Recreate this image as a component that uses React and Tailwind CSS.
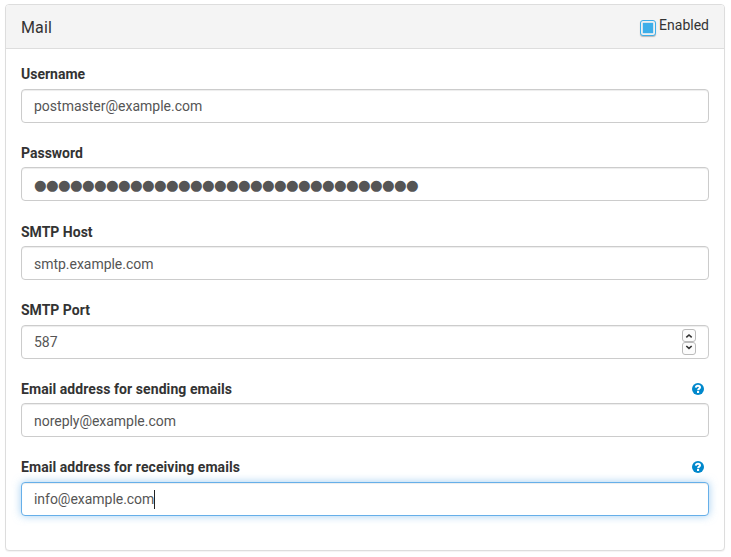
function Help() {
  return (
    <svg className="mr-[5px] h-3 w-3" viewBox="0 0 12 12" aria-label="Help">
      <circle cx="6" cy="6" r="6" fill="#0088cc" />
      <path d="M3.8 4.6C4 3.2 4.9 2.8 6 2.8C7.3 2.8 8 3.5 8 4.4C8 5.6 6.1 5.6 6.1 7.2" fill="none" stroke="#fff" strokeWidth="2" />
      <rect x="5" y="8" width="2.1" height="2" fill="#fff" />
    </svg>
  );
}

function Stepper() {
  return (
    <div className="flex w-3.5 flex-col">
      <button className="flex h-[13px] items-center justify-center rounded-[3px] border border-[#bbb] bg-[#fcfcfc]">
        <svg className="h-1.5 w-2" viewBox="0 0 8 6">
          <path d="M1.3 4.4L4 2L6.7 4.4" fill="none" stroke="#333" strokeWidth="1.6" />
        </svg>
      </button>
      <button className="flex h-[13px] items-start justify-center rounded-[3px] border border-[#bbb] bg-[#fcfcfc] pt-0.5">
        <svg className="h-1.5 w-2" viewBox="0 0 8 6">
          <path d="M1.3 1L4 3.4L6.7 1" fill="none" stroke="#333" strokeWidth="1.6" />
        </svg>
      </button>
    </div>
  );
}

const idle = "border-[#ccc] shadow-[inset_0_1px_1px_rgba(0,0,0,0.075)]";
const focused = "border-[#66afe9] shadow-[inset_0_1px_1px_rgba(0,0,0,0.075),0_0_8px_rgba(102,175,233,0.6)]";

const fields = [
  { label: "Username", value: "postmaster@example.com", row: "h-[25px]", gap: "mb-5", text: "" },
  { label: "Password", value: "●".repeat(32), row: "h-6", gap: "mb-[21px]", text: "font-['DejaVu_Sans',sans-serif] text-[14.5px] tracking-[-0.65px] mt-px" },
  { label: "SMTP Host", value: "smtp.example.com", row: "h-6", gap: "mb-5", text: "mt-0.5 tracking-[-0.03px]" },
  { label: "SMTP Port", value: "587", row: "h-[25px]", gap: "mb-5", text: "", stepper: true },
  { label: "Email address for sending emails", value: "noreply@example.com", row: "h-6 tracking-[0.07px]", gap: "mb-5", text: "mt-0.5 tracking-[-0.03px]", help: true },
  { label: "Email address for receiving emails", value: "info@example.com", row: "h-[25px] tracking-[0.07px]", gap: "", text: "tracking-[-0.03px]", help: true, focus: true },
];

export default function App() {
  return (
    <div className="h-[557px] bg-white px-[5px] pt-1 font-['Roboto',sans-serif] text-sm leading-5 text-[#333]">
      <section className="h-[547px] w-[720px] rounded border border-[#ddd] bg-white shadow-[0_1px_1px_rgba(0,0,0,0.05)]">
        <header className="flex h-11 justify-between rounded-t-[3px] border-b border-[#ddd] bg-[#f4f4f4] px-[15px]">
          <h3 className="mt-[13px] text-base leading-5 tracking-[0.15px]">Mail</h3>
          <label className="flex pt-2.5">
            <span className="mt-[5px] mr-[3px] flex h-4 w-4 items-center justify-center rounded-[3px] border border-[#3daee9] bg-[#eff0f1] shadow-[0_1px_1px_rgba(0,0,0,0.25)]">
              <span className="h-2.5 w-2.5 bg-[#3daee9] shadow-[0_0_1px_#3daee9]" />
            </span>
            <span>Enabled</span>
          </label>
        </header>
        <form className="px-[15px] pt-[15px]">
          {fields.map((f) => (
            <div key={f.label} className={f.gap}>
              <div className={`flex justify-between ${f.row}`}>
                <span className="font-bold">{f.label}</span>
                {f.help && <span className="flex h-5 items-center"><Help /></span>}
              </div>
              <div className={`flex h-[34px] items-center justify-between rounded border bg-white px-3 ${f.focus ? focused : idle}`}>
                <span className={`flex items-center text-[#555] ${f.text}`}>
                  {f.value}
                  {f.focus && <span className="-ml-[0.4px] h-[19px] w-px bg-[#222]" />}
                </span>
                {f.stepper && <Stepper />}
              </div>
            </div>
          ))}
        </form>
      </section>
    </div>
  );
}
